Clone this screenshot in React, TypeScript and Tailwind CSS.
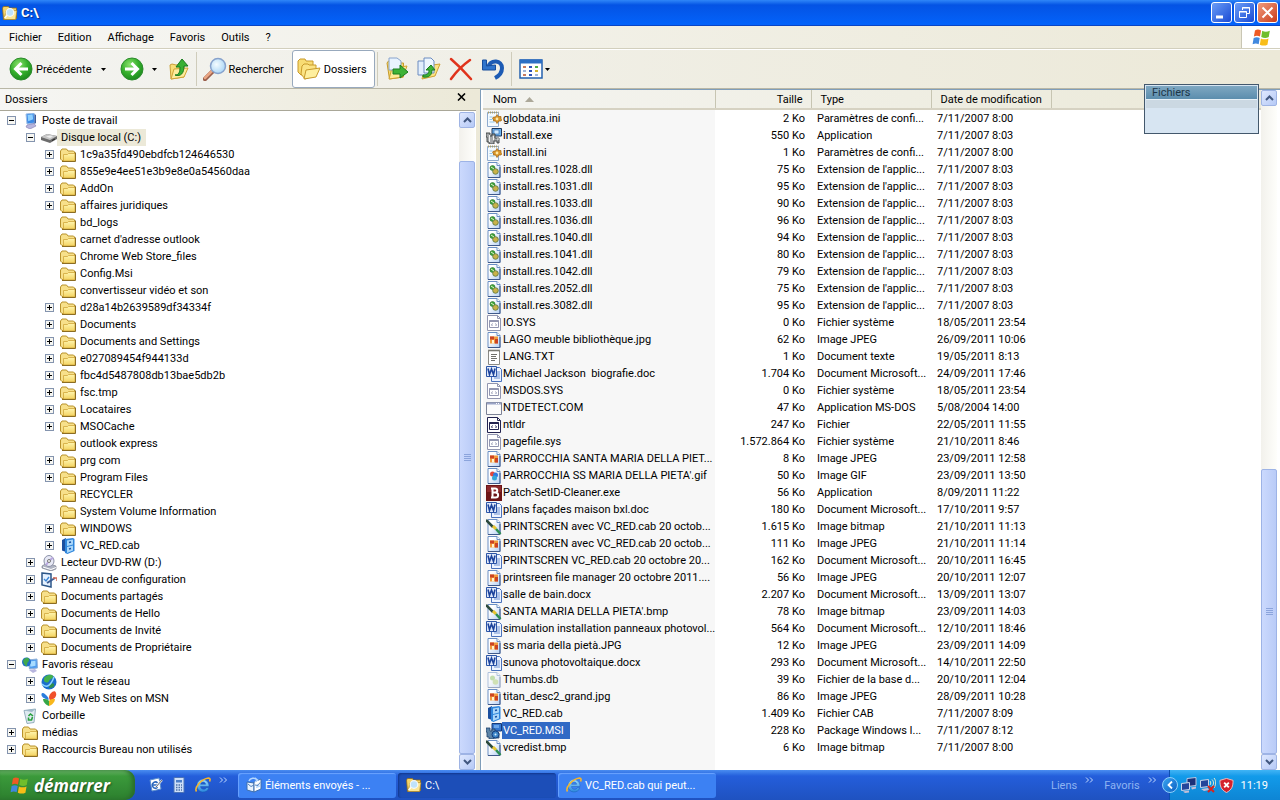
import { FC, ReactNode, useState } from "react";

type IconName =
  | "computer" | "disk" | "folder" | "cab" | "dvd" | "panel" | "network" | "globe"
  | "msn" | "bin" | "ini" | "exe" | "dll" | "sys" | "jpg" | "txt" | "doc" | "com"
  | "ntldr" | "gif" | "patch" | "bmp" | "docx" | "db" | "msi" | "search" | "flag"
  | "ie" | "outlook" | "send" | "calc" | "screens" | "wireless" | "shield";

const page = (
  <>
    <path d="M2 .5h9l3 3v12H2z" fill="url(#page)" stroke="#6a8fc4" />
    <path d="M11 .5v3h3" fill="#fff" stroke="#6a8fc4" />
    <path d="M2 15.500h12V5" fill="none" stroke="#3f598a" />
  </>
);

const word = (
  <>
    <path d="M5.500 1.500h8l2 2v12h-10z" fill="#eef4ff" stroke="#4a72bc" />
    <path d="M8 6h6M8 8h6M8 10h6M8 12h6" stroke="#6f92d2" />
    <path d="M.5.5h10v10H.5z" fill="#dfe9fa" stroke="#2d56a8" />
    <path d="M2 2.500l1.500 6L5.500 3l2 5.500L9 2.500" fill="none" stroke="#1c439c" strokeWidth="1.600" />
  </>
);

const sysPage = (color: string) => (
  <>
    <path d="M1.500.5h10l3 3v12h-13z" fill="#fff" stroke={color} />
    <path d="M11.500.5v3h3" fill="none" stroke={color} />
    <path d="M3.500 5.500h9v7h-9z" fill="#fff" stroke={color} />
    <path d="M3.500 6h9" stroke={color} strokeWidth="2" />
    <path d="M6.500 8.500L5.500 10l1 1M9.500 8.500l1 1.500-1 1" fill="none" stroke={color} />
  </>
);

const cabinet = (
  <>
    <path d="M2 2l4-2v14l-4-1.500z" fill="#1b4f9f" />
    <path d="M5 1l8-1 1.500 1v12l-7 3-2.500-1z" fill="#2f86dc" />
    <path d="M7 2.500l6-1v5l-6 1.500zM7 9l6-1.500v5L7 15z" fill="#a9d7fa" />
    <path d="M9 4.500l2-.5M9 11l2-.5" stroke="#1b4f9f" strokeWidth="1.500" />
  </>
);

const ieLogo = (
  <>
    <path
      d="M14 9.500H5.500c.2 3.200 4.500 3.700 5.800 1.200h2.500C12.600 16.500 2 17 2 8.500c0-8 12-8 12 1zM5.600 7.300h5c-.3-3-4.600-3-5 0z"
      fill="url(#ieblue)"
      stroke="#1356a8"
      strokeWidth=".4"
    />
    <path d="M1.500 14.500C-1 11 6 2 13.500 1c2 0 1.800 2 1 3.500" fill="none" stroke="#f6b52c" strokeWidth="1.600" />
  </>
);

const flag = (
  <>
    <path d="M2.500 2C4.500.8 6 1.200 7.600 2L6.700 7.200C5 6.400 3.500 6.300 1.600 7.200z" fill="#ee5a24" />
    <path d="M8.600 2.400c2 1 4 1 6.400 0l-.9 5.200c-2 1-4 1-6.300 0z" fill="#6fbe2c" />
    <path d="M1.400 8.400c2-1 3.500-.8 5.100 0L5.600 13.600C4 12.800 2.500 12.800.5 13.600z" fill="#4088de" />
    <path d="M7.500 8.800c2 1 4 1 6.400 0l-.9 5.200c-2 1-4 1-6.400 0z" fill="#f8bd17" />
  </>
);

const drawings: Record<IconName, ReactNode> = {
  computer: (
    <>
      <path d="M4 1l8-1 1 10-8 1z" fill="#3b8ae6" stroke="#9ebfe8" />
      <path d="M5.500 2l5-.7.7 5-5 2z" fill="#8fd0ff" />
      <path d="M12.500 1l1.500 1v8l-1.500 1z" fill="#3d5d9a" />
      <path d="M5 12l7-1.500 2 2.500-6 3-4-2z" fill="#b8b6de" stroke="#8079ae" strokeWidth=".6" />
    </>
  ),
  disk: (
    <>
      <path d="M0 7l6-3 10 2v3l-7 4-9-3z" fill="#6c6c6c" />
      <path d="M0 7l6-3 10 2-7 4z" fill="#c6c6c6" />
      <path d="M5 6.500l4-1 3 1-3 1.500z" fill="#eee" />
      <path d="M11 10.500l3-1.500" stroke="#222" />
    </>
  ),
  folder: (
    <>
      <path d="M.5 4l1.500-2h4.500l1.500 2h5.500l1 1v8.500H2L.5 12z" fill="#f7e08a" stroke="#b8922c" />
      <path d="M3.500 7.500h4l1-1h6.500v7.500H3.500z" fill="url(#folder)" stroke="#d0a63a" strokeWidth=".8" />
      <path d="M2 14.500h13.500V5.500" fill="none" stroke="#8c6d22" />
    </>
  ),
  cab: cabinet,
  dvd: (
    <>
      <path d="M1 11l5-3 9 3v3l-5 2-9-3z" fill="#aeb3c2" stroke="#6f7484" strokeWidth=".6" />
      <ellipse cx="8" cy="6" rx="5" ry="5.500" fill="#e7e9f5" stroke="#8c90a8" />
      <path d="M8 6l4-3.500M8 6l-3 4" stroke="#b9a7df" strokeWidth="2" />
      <circle cx="8" cy="6" r="1.500" fill="#fff" stroke="#777" />
      <path d="M2 12l8 2.500 5-2" stroke="#fff" fill="none" />
    </>
  ),
  panel: (
    <>
      <path d="M1 1l9 1v13l-9-2z" fill="#e6f2ff" stroke="#2c5688" strokeWidth="1.500" />
      <path d="M3 7l2 2 3-4" fill="none" stroke="#3a86d8" strokeWidth="1.300" />
      <path d="M6 11l8-5" stroke="#3c5c92" strokeWidth="2" />
      <path d="M12 6h4v3" fill="none" stroke="#d36b55" strokeWidth="1.500" />
    </>
  ),
  network: (
    <>
      <path d="M6 3l9-1 .5 9-8 1z" fill="#4f9cee" stroke="#8fb0d8" />
      <path d="M7.500 4.500l6-.7v5l-5 1z" fill="#a7dcff" />
      <path d="M7 13l6-1 2 2-4 2z" fill="#b8b6de" />
      <circle cx="4.500" cy="5" r="4.500" fill="#1f6ec8" />
      <path d="M1 4c2-4 5-4 6-2S5 5 5 8 2 8 1 4z" fill="#40a84c" />
    </>
  ),
  globe: (
    <>
      <circle cx="8" cy="8" r="7.500" fill="#1c6dcc" />
      <path d="M3 4c3-4 8-4 9-2s-3 3-4 5-3 2-5 0z" fill="#44b04c" />
      <path d="M9 10c3-2 5 0 4 2s-4 2-5 2z" fill="#2f8f4a" />
      <path d="M1 10c5 5 9 1 12-7" fill="none" stroke="#8cd4ff" strokeWidth="1.500" />
    </>
  ),
  msn: (
    <>
      <path d="M7.500 7C5 3 1 .5.500 3s2 4.500 7 6z" fill="#2a7ddd" />
      <path d="M8 7c0-5 6-9 7-5s-2 6-6 7.500z" fill="#f0502a" />
      <path d="M2 8c2 0 5 0 6 2v5C5 14 2 11 2 8z" fill="#37a646" />
      <path d="M14 8c-2 0-5 0-6 2v5c3-1 6-4 6-7z" fill="#f8b71c" />
    </>
  ),
  bin: (
    <>
      <path d="M2 2.500l11.500-1.500L12 14.500 5 15.500z" fill="#dfeaf0" stroke="#94aebd" />
      <path d="M2 2.500l8 1.500 3.500-3" fill="#9fb9c8" />
      <path d="M6.500 8l2-2 2.500 2M10.500 9l-1 3h-3l0-2.500" fill="none" stroke="#28a03c" strokeWidth="1.600" />
    </>
  ),
  ini: (
    <>
      <path d="M1.500 1.500h11v14h-11z" fill="#f4faff" stroke="#8fabcf" />
      <path d="M2 1.500h10.500" stroke="#a99b66" strokeWidth="2" strokeDasharray="1 1" />
      <path d="M3.500 6h3M3.500 8.500h3M3.500 11h5" stroke="#93c7e8" />
      <path d="M11 3.500l1.500 2h2.500v2l1 1-1 1.500H13l-2 2.500-1.500-2.500H7.500V8L6.500 7.500l1-1.500h2z" fill="#d9962a" stroke="#9c6114" strokeWidth=".7" />
      <circle cx="11" cy="8" r="1.400" fill="#ffe9a6" />
    </>
  ),
  exe: (
    <>
      <path d="M6 .5h9.500v7.500H6z" fill="#6fb4ee" stroke="#1e3558" />
      <path d="M8 2h5v4H8z" fill="#cfeaff" stroke="#2b62a4" strokeWidth=".6" />
      <path d="M0 5h4v3h2V6h3v4h4v5h-2v-2H8v3H3v-2H1V9H0z" fill="#a3a6a8" stroke="#3a3e40" strokeWidth=".9" />
      <path d="M3.500 7v7M7.500 8v4M11 11h2" stroke="#f0f0f0" />
    </>
  ),
  dll: (
    <>
      {page}
      <circle cx="6.500" cy="6" r="2.500" fill="#3fa53c" stroke="#2a6f2c" strokeWidth=".6" />
      <circle cx="9.500" cy="9.500" r="2.800" fill="#c9b24a" stroke="#55743a" strokeWidth=".8" />
      <path d="M5 5l3 2" stroke="#e4f2c8" />
    </>
  ),
  sys: sysPage("#9296b0"),
  jpg: (
    <>
      {page}
      <path d="M4 4.500h8v7H4z" fill="#f39b3c" />
      <path d="M4 4.500h4v3H4zM9 7h3v4.500H9z" fill="#cb4324" />
      <path d="M6 8h2v3.500H6z" fill="#fff3cf" />
    </>
  ),
  txt: (
    <>
      <path d="M2.500 1.500h11v14h-11z" fill="#fff" stroke="#8a8a86" />
      <path d="M2.500 1.500h11" stroke="#66665c" strokeWidth="2" strokeDasharray="1 1" />
      <path d="M5 5.500h6M5 7.500h5M5 9.500h6M5 11.500h4" stroke="#70706c" />
    </>
  ),
  doc: word,
  docx: word,
  com: (
    <>
      <path d="M.5 2.500h15v12H.5z" fill="#fbfbfb" stroke="#7c8296" />
      <path d="M1 3.500h14" stroke="#9aa4c6" strokeWidth="2" />
      <path d="M10 3.500h4" stroke="#fff" strokeDasharray="1 1" />
    </>
  ),
  ntldr: sysPage("#232350"),
  gif: (
    <>
      {page}
      <circle cx="6.500" cy="6" r="2.500" fill="#e14a3b" />
      <circle cx="9.500" cy="7" r="2.500" fill="#2f7be0" />
      <circle cx="8.500" cy="10" r="2.500" fill="#35a7d8" />
    </>
  ),
  patch: (
    <>
      <path d="M0 0h16v16H0z" fill="#6c1517" />
      <path d="M1 1h14v6H1z" fill="#8c282b" />
      <path d="M5 3.500h4c3 0 3 4 0 4H6.500h3c3.500 0 3.500 5 0 5H5M6.500 3.500v9" fill="none" stroke="#fff" strokeWidth="2" />
    </>
  ),
  bmp: (
    <>
      {page}
      <path d="M0 1l7 7" stroke="#2c4a3c" strokeWidth="2.500" />
      <path d="M7 7l3 3" stroke="#e6c531" strokeWidth="3" />
      <path d="M10 10l4.500 5" stroke="#2c8e52" strokeWidth="2.500" />
    </>
  ),
  db: (
    <g opacity=".5">
      {page}
      <circle cx="6.500" cy="6" r="2.500" fill="#8fc66a" />
      <circle cx="9.500" cy="10" r="2.800" fill="#a9cc74" />
    </g>
  ),
  msi: (
    <>
      <path d="M6 .5h9.500v7.500H6z" fill="#3577cf" stroke="#163a78" />
      <path d="M8 2h5v3H8z" fill="#6aa6ea" />
      <path d="M0 5h4v3h2V6h3v4h4v5H8v1H3v-2H1V9H0z" fill="#5c84a8" stroke="#1d3f6a" strokeWidth=".8" />
      <circle cx="9.500" cy="11.500" r="3.500" fill="#3d86c9" stroke="#123d7c" />
      <circle cx="9.500" cy="11.500" r="1" fill="#d7efff" />
    </>
  ),
  search: (
    <>
      <path d="M.5 3l1-1.500h5l1 1.500h7v10.500l-1 1h-12z" fill="#f6d468" stroke="#8d6a1d" strokeWidth=".8" />
      <path d="M4 6l11-.5-1.500 9H2z" fill="#fbe695" stroke="#9a7724" strokeWidth=".6" />
      <circle cx="8" cy="7.500" r="3.800" fill="#bfe2fb" stroke="#f4f8fa" strokeWidth="1.200" />
      <path d="M5 10.500L2.500 13" stroke="#fff" strokeWidth="1.500" />
    </>
  ),
  flag,
  ie: ieLogo,
  outlook: (
    <>
      <path d="M3 3l9-2 2 11-9 2z" fill="#fff" stroke="#5b8fd0" />
      <path d="M10.500 6c-2-2.500-6 0-5 3s4 2.500 5 1M6 8h5" fill="none" stroke="#2a67bc" strokeWidth="1.500" />
      <path d="M9 10l6-7" stroke="#e7eef8" strokeWidth="2" />
      <path d="M9 10l6-7" stroke="#333" strokeWidth=".7" />
    </>
  ),
  send: (
    <>
      <path d="M1 5l7 1v9l-7-2z" fill="#e9f3ff" stroke="#3d6faf" />
      <path d="M8 5l7-3v10l-7 3z" fill="#fff" stroke="#3d6faf" />
      <path d="M3 4c1-3 6-4 8-1M9 1l2.500 2L9 5M12 7l-1 3 3-1" fill="none" stroke="#b6d8ff" strokeWidth="1.500" />
      <path d="M2 7l3 2.500L8 8M9 8l3 .5 2-3" fill="none" stroke="#5583bc" />
    </>
  ),
  calc: (
    <>
      <path d="M3 .5h10v15H3z" fill="#cfe0f8" stroke="#4c74b8" />
      <path d="M5 3h6v2.500H5z" fill="#4d7fc8" />
      <path d="M5 8h6M5 10.500h6M5 13h6" stroke="#4c70a8" strokeWidth="1.400" strokeDasharray="1.500 1" />
    </>
  ),
  screens: (
    <>
      <path d="M6 1.500l9-1v8l-9 1z" fill="#1b3179" stroke="#bcc8e2" />
      <path d="M.5 6.500l8-1v7l-8 1z" fill="#24459a" stroke="#ccd6ea" />
      <path d="M2 14.500l6-1v2l-4 .5zM10 10.500l5-1v2l-4 1z" fill="#c6bfd6" />
    </>
  ),
  wireless: (
    <>
      <path d="M.5 3.500l8-1v7l-8 1z" fill="#24459a" stroke="#ccd6ea" />
      <path d="M1 12l7-1 1 2-5 1z" fill="#c6bfd6" />
      <path d="M10 4c1 1 1 3 0 4M12 2.500c2 2 2 5 0 7M14 1c2.500 3 2 7 0 10" fill="none" stroke="#e8edcf" />
      <path d="M8 9l6 6M14 9l-6 6" stroke="#d9241c" strokeWidth="2" />
    </>
  ),
  shield: (
    <>
      <path d="M8 .5l7 2c0 6-1 10-7 13-6-3-7-7-7-13z" fill="#d4202c" stroke="#f3c1c1" />
      <path d="M5.500 5l5 5M10.500 5l-5 5" stroke="#fff" strokeWidth="2" />
    </>
  ),
};

const Icon: FC<{ name: IconName; className?: string }> = ({ name, className = "w-4 h-4" }) => (
  <svg viewBox="0 0 16 16" className={`shrink-0 ${className}`} aria-hidden="true">
    {drawings[name]}
  </svg>
);

interface TreeNode {
  label: string;
  icon: IconName;
  level: number;
  state?: "open" | "closed";
}

const dir = (label: string, closed = true, level = 2): TreeNode => ({
  label,
  icon: "folder",
  level,
  state: closed ? "closed" : undefined,
});

const tree: TreeNode[] = [
  { label: "Poste de travail", icon: "computer", level: 0, state: "open" },
  { label: "Disque local (C:)", icon: "disk", level: 1, state: "open" },
  dir("1c9a35fd490ebdfcb124646530"),
  dir("855e9e4ee51e3b9e8e0a54560daa"),
  dir("AddOn"),
  dir("affaires juridiques"),
  dir("bd_logs", false),
  dir("carnet d'adresse outlook", false),
  dir("Chrome Web Store_files", false),
  dir("Config.Msi", false),
  dir("convertisseur vidéo et son", false),
  dir("d28a14b2639589df34334f"),
  dir("Documents"),
  dir("Documents and Settings"),
  dir("e027089454f944133d"),
  dir("fbc4d5487808db13bae5db2b"),
  dir("fsc.tmp"),
  dir("Locataires"),
  dir("MSOCache"),
  dir("outlook express", false),
  dir("prg com"),
  dir("Program Files"),
  dir("RECYCLER", false),
  dir("System Volume Information", false),
  dir("WINDOWS"),
  { label: "VC_RED.cab", icon: "cab", level: 2, state: "closed" },
  { label: "Lecteur DVD-RW (D:)", icon: "dvd", level: 1, state: "closed" },
  { label: "Panneau de configuration", icon: "panel", level: 1, state: "closed" },
  dir("Documents partagés", true, 1),
  dir("Documents de Hello", true, 1),
  dir("Documents de Invité", true, 1),
  dir("Documents de Propriétaire", true, 1),
  { label: "Favoris réseau", icon: "network", level: 0, state: "open" },
  { label: "Tout le réseau", icon: "globe", level: 1, state: "closed" },
  { label: "My Web Sites on MSN", icon: "msn", level: 1, state: "closed" },
  { label: "Corbeille", icon: "bin", level: 0 },
  dir("médias", true, 0),
  dir("Raccourcis Bureau non utilisés", true, 0),
];

const indents = ["pl-[7px]", "pl-[26px]", "pl-[45px]"];

const files: [IconName, string, string, string, string][] = [
  ["ini", "globdata.ini", "2 Ko", "Paramètres de confi...", "7/11/2007 8:00"],
  ["exe", "install.exe", "550 Ko", "Application", "7/11/2007 8:03"],
  ["ini", "install.ini", "1 Ko", "Paramètres de confi...", "7/11/2007 8:00"],
  ["dll", "install.res.1028.dll", "75 Ko", "Extension de l'applic...", "7/11/2007 8:03"],
  ["dll", "install.res.1031.dll", "95 Ko", "Extension de l'applic...", "7/11/2007 8:03"],
  ["dll", "install.res.1033.dll", "90 Ko", "Extension de l'applic...", "7/11/2007 8:03"],
  ["dll", "install.res.1036.dll", "96 Ko", "Extension de l'applic...", "7/11/2007 8:03"],
  ["dll", "install.res.1040.dll", "94 Ko", "Extension de l'applic...", "7/11/2007 8:03"],
  ["dll", "install.res.1041.dll", "80 Ko", "Extension de l'applic...", "7/11/2007 8:03"],
  ["dll", "install.res.1042.dll", "79 Ko", "Extension de l'applic...", "7/11/2007 8:03"],
  ["dll", "install.res.2052.dll", "75 Ko", "Extension de l'applic...", "7/11/2007 8:03"],
  ["dll", "install.res.3082.dll", "95 Ko", "Extension de l'applic...", "7/11/2007 8:03"],
  ["sys", "IO.SYS", "0 Ko", "Fichier système", "18/05/2011 23:54"],
  ["jpg", "LAGO meuble bibliothèque.jpg", "62 Ko", "Image JPEG", "26/09/2011 10:06"],
  ["txt", "LANG.TXT", "1 Ko", "Document texte", "19/05/2011 8:13"],
  ["doc", "Michael Jackson  biografie.doc", "1.704 Ko", "Document Microsoft...", "24/09/2011 17:46"],
  ["sys", "MSDOS.SYS", "0 Ko", "Fichier système", "18/05/2011 23:54"],
  ["com", "NTDETECT.COM", "47 Ko", "Application MS-DOS", "5/08/2004 14:00"],
  ["ntldr", "ntldr", "247 Ko", "Fichier", "22/05/2011 11:55"],
  ["sys", "pagefile.sys", "1.572.864 Ko", "Fichier système", "21/10/2011 8:46"],
  ["jpg", "PARROCCHIA SANTA MARIA DELLA PIET...", "8 Ko", "Image JPEG", "23/09/2011 12:58"],
  ["gif", "PARROCCHIA SS MARIA DELLA PIETA'.gif", "50 Ko", "Image GIF", "23/09/2011 13:50"],
  ["patch", "Patch-SetID-Cleaner.exe", "56 Ko", "Application", "8/09/2011 11:22"],
  ["doc", "plans façades maison bxl.doc", "180 Ko", "Document Microsoft...", "17/10/2011 9:57"],
  ["bmp", "PRINTSCREN avec VC_RED.cab 20 octob...", "1.615 Ko", "Image bitmap", "21/10/2011 11:13"],
  ["jpg", "PRINTSCREN avec VC_RED.cab 20 octob...", "111 Ko", "Image JPEG", "21/10/2011 11:14"],
  ["docx", "PRINTSCREN VC_RED.cab 20 octobre 20...", "162 Ko", "Document Microsoft...", "20/10/2011 16:45"],
  ["jpg", "printsreen file manager 20 octobre 2011....", "56 Ko", "Image JPEG", "20/10/2011 12:07"],
  ["docx", "salle de bain.docx", "2.207 Ko", "Document Microsoft...", "13/09/2011 13:07"],
  ["bmp", "SANTA MARIA DELLA PIETA'.bmp", "78 Ko", "Image bitmap", "23/09/2011 14:03"],
  ["docx", "simulation installation panneaux photovol...", "564 Ko", "Document Microsoft...", "12/10/2011 18:46"],
  ["jpg", "ss maria della pietà.JPG", "12 Ko", "Image JPEG", "23/09/2011 14:09"],
  ["docx", "sunova photovoltaique.docx", "293 Ko", "Document Microsoft...", "14/10/2011 22:50"],
  ["db", "Thumbs.db", "39 Ko", "Fichier de la base d...", "20/10/2011 12:04"],
  ["jpg", "titan_desc2_grand.jpg", "86 Ko", "Image JPEG", "28/09/2011 10:28"],
  ["cab", "VC_RED.cab", "1.409 Ko", "Fichier CAB", "7/11/2007 8:09"],
  ["msi", "VC_RED.MSI", "228 Ko", "Package Windows I...", "7/11/2007 8:12"],
  ["bmp", "vcredist.bmp", "6 Ko", "Image bitmap", "7/11/2007 8:00"],
];

const Gradients = () => (
  <svg className="absolute w-0 h-0" aria-hidden="true">
    <defs>
      <linearGradient id="page" x1="0" y1="0" x2="1" y2="1">
        <stop offset=".3" stopColor="#fff" />
        <stop offset="1" stopColor="#b4d0f4" />
      </linearGradient>
      <linearGradient id="folder" x1="0" y1="0" x2="0" y2="1">
        <stop offset="0" stopColor="#fff5ae" />
        <stop offset="1" stopColor="#f3d361" />
      </linearGradient>
      <linearGradient id="ieblue" x1="0" y1="0" x2="0" y2="1">
        <stop offset="0" stopColor="#9adcff" />
        <stop offset="1" stopColor="#2a86de" />
      </linearGradient>
      <radialGradient id="green" cx=".4" cy=".3" r=".8">
        <stop offset="0" stopColor="#8be06c" />
        <stop offset=".5" stopColor="#35b02c" />
        <stop offset="1" stopColor="#16801a" />
      </radialGradient>
      <radialGradient id="lens" cx=".4" cy=".4" r=".7">
        <stop offset="0" stopColor="#f4fcff" />
        <stop offset="1" stopColor="#a3d2f6" />
      </radialGradient>
    </defs>
  </svg>
);

const Caret = () => (
  <svg viewBox="0 0 5 3" className="w-[5px] h-[3px]" aria-hidden="true">
    <path d="M0 0h5L2.500 3z" />
  </svg>
);

const Arrow: FC<{ back?: boolean }> = ({ back }) => (
  <svg viewBox="0 0 24 24" className="w-6 h-6" aria-hidden="true">
    <circle cx="12" cy="12" r="11" fill="url(#green)" stroke="#2c8b2c" />
    <path
      d={back ? "M19 12H7M12.500 6L6.500 12l6 6" : "M5 12h12M11.500 6l6 6-6 6"}
      fill="none"
      stroke="#fff"
      strokeWidth="3"
    />
  </svg>
);

// folder with an open front flap, shared by the toolbar drawings
const OpenFolder = () => (
  <>
    <path d="M2 6l1.500-2h5l1 2h9v14l-14 2z" fill="#f7d96c" stroke="#c59a2c" />
    <path d="M7 11l15-2-4 11-14 2z" fill="#fdeb97" stroke="#cfa233" />
  </>
);

const Separator = () => <span className="w-px self-stretch my-0.5 bg-[#cfccbb]" />;

const Toolbar = () => (
  <div className="flex items-center h-[40px] pl-[9px] border-t border-white bg-gradient-to-r from-[#f3f3f0] to-[#ece9d8] border-b border-b-[#b9b7a6]">
    <button className="flex items-center gap-[3px]">
      <Arrow back />
      Précédente
    </button>
    <button className="w-6 h-6 flex items-center justify-center" aria-label="Historique précédent">
      <Caret />
    </button>
    <button className="ml-1" aria-label="Suivante">
      <Arrow />
    </button>
    <button className="w-[22px] h-6 flex items-center justify-center" aria-label="Historique suivant">
      <Caret />
    </button>
    <button className="ml-px mr-[5px]" aria-label="Dossier parent">
      <svg viewBox="0 0 24 24" className="w-6 h-6" aria-hidden="true">
        <path d="M3 8l2-1 4 1 8-1v13L4 22z" fill="#f9dd78" stroke="#c99f35" />
        <path d="M7 12l14-1-4 9-13 2z" fill="#fdec9c" stroke="#d1a437" />
        <path d="M8 18c4 0 5-3 5-8H9l6-8 6 7h-4c0 7-3 11-9 9z" fill="#38b034" stroke="#177a1c" />
      </svg>
    </button>
    <Separator />
    <button className="flex items-center gap-0.5 ml-[6px] mr-2">
      <svg viewBox="0 0 24 24" className="w-6 h-6" aria-hidden="true">
        <path d="M9 15l-7 7" stroke="#9a5f4c" strokeWidth="4.500" strokeLinecap="round" />
        <path d="M9 14l-7 7" stroke="#e9a684" strokeWidth="2.500" strokeLinecap="round" />
        <circle cx="15" cy="9" r="7.500" fill="url(#lens)" stroke="#87a2cc" strokeWidth="1.500" />
      </svg>
      Rechercher
    </button>
    <button className="flex items-center gap-[3px] h-[38px] pl-1 pr-[7px] rounded-[3px] bg-white border border-[#98a9bd]">
      <svg viewBox="0 0 24 24" className="w-6 h-6" aria-hidden="true">
        <path d="M1 4l2-2h5l1 2h7v12L4 18l-3-3z" fill="#f8dc74" stroke="#c89a2b" />
        <path d="M5 9l2-2h4l1 1h7v10L8 22l-4-5z" fill="#fbe383" stroke="#c89a2b" />
        <path d="M9 13l14-2-4 9-12 2z" fill="#feef9f" stroke="#c89a2b" />
      </svg>
      Dossiers
    </button>
    <span className="w-0.5" />
    <Separator />
    <button className="ml-[7px]" aria-label="Déplacer vers">
      <svg viewBox="0 0 24 24" className="w-6 h-6" aria-hidden="true">
        <OpenFolder />
        <path d="M4 1h8l4 3v9H4z" fill="#e8f3fe" stroke="#88a4cc" />
        <path d="M8 12h7V8l8 7-8 6v-4H8z" fill="#3db336" stroke="#1a7d1e" />
      </svg>
    </button>
    <button className="ml-2" aria-label="Copier vers">
      <svg viewBox="0 0 24 24" className="w-6 h-6" aria-hidden="true">
        <path d="M8 9l15-2-5 12-13 3z" fill="#fbe384" stroke="#cfa233" />
        <path d="M1 4h7l2 2v12H1z" fill="#e3effd" stroke="#6c8cc0" />
        <path d="M7 1h7l3 3v12H7z" fill="#edf6ff" stroke="#6c8cc0" />
        <path d="M6 18c4 0 6-1 6-5H9l5-5 4 5h-3c0 5-3 8-9 7z" fill="#3db336" stroke="#1a7d1e" />
      </svg>
    </button>
    <button className="ml-2" aria-label="Supprimer">
      <svg viewBox="0 0 24 24" className="w-6 h-6" aria-hidden="true">
        <path d="M2 2c7 6 13 12 20 20M21 3C14 8 7 15 2 22" fill="none" stroke="#e0331c" strokeWidth="2.500" strokeLinecap="round" />
      </svg>
    </button>
    <button className="ml-2" aria-label="Annuler">
      <svg viewBox="0 0 24 24" className="w-6 h-6" aria-hidden="true">
        <path d="M7 10c3-8 14-7 14 1 0 5-3 8-7 10" fill="none" stroke="#1d5bb4" strokeWidth="4" />
        <path d="M1.500 3h4v6l9-1v5H1.500z" fill="#2f74cc" stroke="#174d9c" />
      </svg>
    </button>
    <span className="w-[6px]" />
    <Separator />
    <button className="flex items-center gap-0.5 ml-[7px]" aria-label="Affichage">
      <svg viewBox="0 0 24 20" className="w-6 h-5" aria-hidden="true">
        <path d="M1 1h22v18H1z" fill="#fff" stroke="#2462ae" strokeWidth="1.500" />
        <path d="M1 2.500h22" stroke="#2c6fc4" strokeWidth="4" />
        <path d="M4 8h3M4 16h3" stroke="#c97b5f" strokeWidth="2" />
        <path d="M4 12h3M16 16h3" stroke="#a2b6d8" strokeWidth="2" />
        <path d="M10 8h3M10 12h3M10 16h3" stroke="#3054b8" strokeWidth="2" />
        <path d="M16 8h3" stroke="#52ae42" strokeWidth="2" />
        <path d="M16 12h3" stroke="#d5b32e" strokeWidth="2" />
      </svg>
      <Caret />
    </button>
  </div>
);

const ScrollButton: FC<{ down?: boolean }> = ({ down }) => (
  <button
    className="w-4 h-4 shrink-0 flex items-center justify-center rounded-[2px] border border-[#9fb4e4] bg-gradient-to-br from-[#dfe8fe] to-[#b5c9f6]"
    aria-label={down ? "Défiler vers le bas" : "Défiler vers le haut"}
  >
    <svg viewBox="0 0 9 6" className="w-[9px] h-[6px]" aria-hidden="true">
      <path d={down ? "M1 1l3.500 3.500L8 1" : "M1 5l3.500-3.500L8 5"} fill="none" stroke="#41577f" strokeWidth="2" />
    </svg>
  </button>
);

const ScrollBar: FC<{ spacer: string }> = ({ spacer }) => (
  <div className="flex flex-col w-4 shrink-0 bg-gradient-to-r from-[#f2f1ec] to-[#fefefb]">
    <ScrollButton />
    <div className="flex-1 flex flex-col">
      <div className={spacer} />
      <div className="flex-1 flex flex-col items-center justify-center gap-px rounded-[2px] border border-[#9db3e6] bg-gradient-to-r from-[#cbd9fd] to-[#b9cbf7]">
        {[0, 1, 2, 3].map((i) => (
          <span key={i} className="w-[7px] h-px bg-[#8ba4dc]" />
        ))}
      </div>
    </div>
    <ScrollButton down />
  </div>
);

const FolderTree = () => {
  const [selected, setSelected] = useState("Disque local (C:)");
  return (
    <aside className="flex flex-col w-[476px] shrink-0">
      <div className="flex items-center justify-between h-[22px] pl-[5px] pr-[10px] border-b border-[#a9a798] bg-gradient-to-r from-[#f6f6f4] to-[#ece9d8]">
        <h2>Dossiers</h2>
        <button className="mb-1.5" aria-label="Fermer le volet">
          <svg viewBox="0 0 9 8" className="w-[9px] h-2" aria-hidden="true">
            <path d="M1 .5l7 7M8 .5l-7 7" stroke="#000" strokeWidth="1.600" />
          </svg>
        </button>
      </div>
      <div className="flex flex-1 min-h-0 pt-px bg-white pr-px">
        <ul className="flex-1 min-w-0 overflow-hidden">
          {tree.map((node) => (
            <li key={node.label} className={`flex items-center h-[17px] ${indents[node.level]}`}>
              {node.state ? (
                <button
                  className="w-[9px] h-[9px] shrink-0 border border-[#8494ae] bg-[#f6f6f2]"
                  aria-label={`${node.state === "open" ? "Réduire" : "Développer"} ${node.label}`}
                >
                  <svg viewBox="0 0 7 7" className="w-[7px] h-[7px]" aria-hidden="true">
                    <path d={node.state === "open" ? "M1 3.500h5" : "M1 3.500h5M3.500 1v5"} stroke="#000" />
                  </svg>
                </button>
              ) : (
                <span className="w-[9px]" />
              )}
              <button className="flex items-center ml-[6px]" onClick={() => setSelected(node.label)}>
                <Icon name={node.icon} />
                <span
                  className={`h-[17px] pl-1 pr-[5px] whitespace-nowrap ${
                    node.label === selected ? "bg-[#ece9d8]" : ""
                  }`}
                >
                  {node.label}
                </span>
              </button>
            </li>
          ))}
        </ul>
        <ScrollBar spacer="basis-[33px]" />
      </div>
    </aside>
  );
};

const FileList = () => {
  const [selected, setSelected] = useState("VC_RED.MSI");
  const head = "font-normal border-r border-[#c7c5b2]";
  return (
    <main className="flex flex-1 min-w-0 bg-white border-t border-l border-[#7f9db9] pl-0.5 pr-[3px]">
      <div className="flex-1 min-w-0 overflow-hidden">
        <table className="w-full h-full table-fixed border-collapse whitespace-pre">
          <colgroup>
            <col className="w-[232px]" />
            <col className="w-[96px]" />
            <col className="w-[120px]" />
            <col className="w-[120px]" />
            <col />
          </colgroup>
          <thead>
            <tr className="h-[19px] bg-gradient-to-r from-[#f4f4f0] to-[#ebe9d8] border-b-2 border-[#d6d2c2]">
              <th scope="col" className={`${head} text-left pl-[10px]`}>
                <span className="flex items-center gap-2">
                  Nom
                  <svg viewBox="0 0 9 5" className="w-[9px] h-[5px]" aria-hidden="true">
                    <path d="M0 5h9L4.500 0z" fill="#aca899" />
                  </svg>
                </span>
              </th>
              <th scope="col" className={`${head} text-right pr-2`}>Taille</th>
              <th scope="col" className={`${head} text-left pl-[9px]`}>Type</th>
              <th scope="col" className={`${head} text-left pl-[9px]`}>Date de modification</th>
              <td />
            </tr>
          </thead>
          <tbody>
            {files.map(([icon, name, size, type, date], index) => (
              <tr key={index} className="h-[17px]" onClick={() => setSelected(name)}>
                <td className="bg-[#f7f7f7] pl-[3px]">
                  <span className="flex items-center h-[17px]">
                    <Icon name={icon} />
                    <span
                      className={`h-[17px] pl-px ${
                        name === selected ? "bg-[#316ac5] text-white pr-[6px]" : ""
                      }`}
                    >
                      {name}
                    </span>
                  </span>
                </td>
                <td className="text-right pr-[6px]">{size}</td>
                <td className="pl-[6px]">{type}</td>
                <td className="pl-[6px]">{date}</td>
                <td />
              </tr>
            ))}
            <tr>
              <td className="bg-[#f7f7f7]" />
              <td colSpan={4} />
            </tr>
          </tbody>
        </table>
      </div>
      <ScrollBar spacer="basis-[56%]" />
    </main>
  );
};

const windowButton =
  "w-[21px] h-[21px] flex items-center justify-center rounded-[3px] border border-white";

const Chevrons = () => (
  <svg viewBox="0 0 9 6" className="w-[9px] h-[6px] self-start mt-[7px]" aria-hidden="true">
    <path d="M1 .5L3.500 3 1 5.500M5 .5L7.500 3 5 5.500" fill="none" stroke="#c4dafc" />
  </svg>
);

const tasks: { icon: IconName; label: string; active?: boolean }[] = [
  { icon: "send", label: "Éléments envoyés - ..." },
  { icon: "search", label: "C:\\", active: true },
  { icon: "ie", label: "VC_RED.cab qui peut..." },
];

const Taskbar = () => (
  <footer className="flex h-[30px] shrink-0 text-white bg-gradient-to-b from-[#4a8cf0] via-[#245edb] via-20% to-[#1f52c0]">
    <button className="flex items-center gap-[5px] w-[135px] pl-[10px] rounded-r-[10px] bg-gradient-to-b from-[#6cb86a] via-[#3b9a3b] via-20% to-[#2c7f2e] shadow-[inset_-3px_0_4px_#2a6c2c] font-['Open_Sans','Liberation_Sans',sans-serif] text-[17px] leading-none font-bold italic [text-shadow:1px_1px_2px_#1d4d1e]">
      <Icon name="flag" className="w-[19px] h-[19px]" />
      démarrer
    </button>
    <nav className="flex items-center gap-2 pl-3 w-[103px]" aria-label="Lancement rapide">
      <button aria-label="Outlook Express"><Icon name="outlook" /></button>
      <button aria-label="Calculatrice"><Icon name="calc" /></button>
      <button aria-label="Internet Explorer"><Icon name="ie" /></button>
      <Chevrons />
    </nav>
    <div className="flex flex-1 items-center gap-0.5">
      {tasks.map((task) => (
        <button
          key={task.label}
          className={`flex items-center gap-[3px] w-[158px] h-[25px] pl-2 rounded-[3px] ${
            task.active
              ? "bg-[#1c4eb8] shadow-[inset_1px_1px_2px_#12378c]"
              : "bg-[#3c81f3] shadow-[inset_1px_1px_1px_#6ba4ff]"
          }`}
        >
          <Icon name={task.icon} />
          {task.label}
        </button>
      ))}
    </div>
    <div className="flex items-center gap-2 text-[#8fb4f2]">
      Liens
      <Chevrons />
      <span className="ml-[2px]">Favoris</span>
      <Chevrons />
    </div>
    <div className="flex items-center gap-[3px] ml-3 pr-3 bg-gradient-to-b from-[#3fb4f5] via-[#129bea] via-20% to-[#0e85d4] border-l border-[#0c4fb0]">
      <button
        className="w-4 h-4 -ml-2 flex items-center justify-center rounded-full border border-[#8fd0fa] bg-gradient-to-br from-[#3aa4f0] to-[#0d62c4]"
        aria-label="Afficher les icônes cachées"
      >
        <svg viewBox="0 0 6 8" className="w-[6px] h-2" aria-hidden="true">
          <path d="M5 .5L1.500 4 5 7.500" fill="none" stroke="#fff" strokeWidth="1.800" />
        </svg>
      </button>
      <Icon name="screens" />
      <Icon name="wireless" />
      <Icon name="shield" className="w-[15px] h-[15px]" />
      <time className="ml-1">11:19</time>
    </div>
  </footer>
);

const App = () => (
  <div className="relative flex flex-col h-screen overflow-hidden bg-[#ece9d8] text-black text-[11px] leading-[17px] font-[Roboto,'Liberation_Sans',sans-serif]">
    <Gradients />
    <header className="flex items-center h-[26px] shrink-0 pl-0.5 pr-0.5 bg-gradient-to-b from-[#2f86f8] via-[#0453e4] via-20% to-[#0363fb] border-b border-[#0a45c4]">
      <Icon name="search" />
      <h1 className="ml-[3px] flex-1 text-[13px] font-bold text-white [text-shadow:1px_1px_1px_#0a2a80]">C:\</h1>
      <div className="flex gap-0.5">
        <button className={`${windowButton} bg-gradient-to-br from-[#6c9cf6] to-[#1c48d4]`} aria-label="Réduire">
          <svg viewBox="0 0 13 13" className="w-[13px] h-[13px]" aria-hidden="true">
            <path d="M1 11h7" stroke="#fff" strokeWidth="3" />
          </svg>
        </button>
        <button className={`${windowButton} bg-gradient-to-br from-[#6c9cf6] to-[#1c48d4]`} aria-label="Restaurer">
          <svg viewBox="0 0 13 13" className="w-[13px] h-[13px]" aria-hidden="true">
            <path d="M4.500 4V1.500h7v6H9M4 2h8" fill="none" stroke="#fff" />
            <path d="M1.500 5.500h7v6h-7zM1 6h8" fill="none" stroke="#fff" />
          </svg>
        </button>
        <button className={`${windowButton} bg-gradient-to-br from-[#f09a7c] to-[#c83a14]`} aria-label="Fermer">
          <svg viewBox="0 0 13 13" className="w-[13px] h-[13px]" aria-hidden="true">
            <path d="M1.500 1.500l10 10M11.500 1.500l-10 10" stroke="#fff" strokeWidth="2" />
          </svg>
        </button>
      </div>
    </header>

    <div className="flex items-stretch h-[23px] shrink-0 bg-gradient-to-r from-[#f6f6f3] to-[#ece9d8] border-b border-[#d2cfbd]">
      <nav className="flex flex-1 items-center gap-4 pl-[9px]" aria-label="Menu">
        {["Fichier", "Edition", "Affichage", "Favoris", "Outils", "?"].map((item) => (
          <button key={item}>{item}</button>
        ))}
      </nav>
      <div className="w-[39px] flex items-center justify-center bg-white border-l border-[#c9c6b4]">
        <Icon name="flag" className="w-[19px] h-[19px]" />
      </div>
    </div>

    <Toolbar />

    <div className="flex flex-1 min-h-0 gap-1">
      <FolderTree />
      <FileList />
    </div>

    <section className="absolute top-[84px] right-[21px] w-[115px] h-[50px] border border-[#43586c] bg-[#d7e5f2] p-px">
      <h2 className="h-[14px] leading-[14px] pl-[6px] text-[#1d3648] bg-gradient-to-b from-[#7fa8c2] to-[#5b8dad] border-b border-[#e6f0f7]">
        Fichiers
      </h2>
      <div className="h-2 bg-[#cbd8e2]" />
    </section>

    <Taskbar />
  </div>
);

export default App;
